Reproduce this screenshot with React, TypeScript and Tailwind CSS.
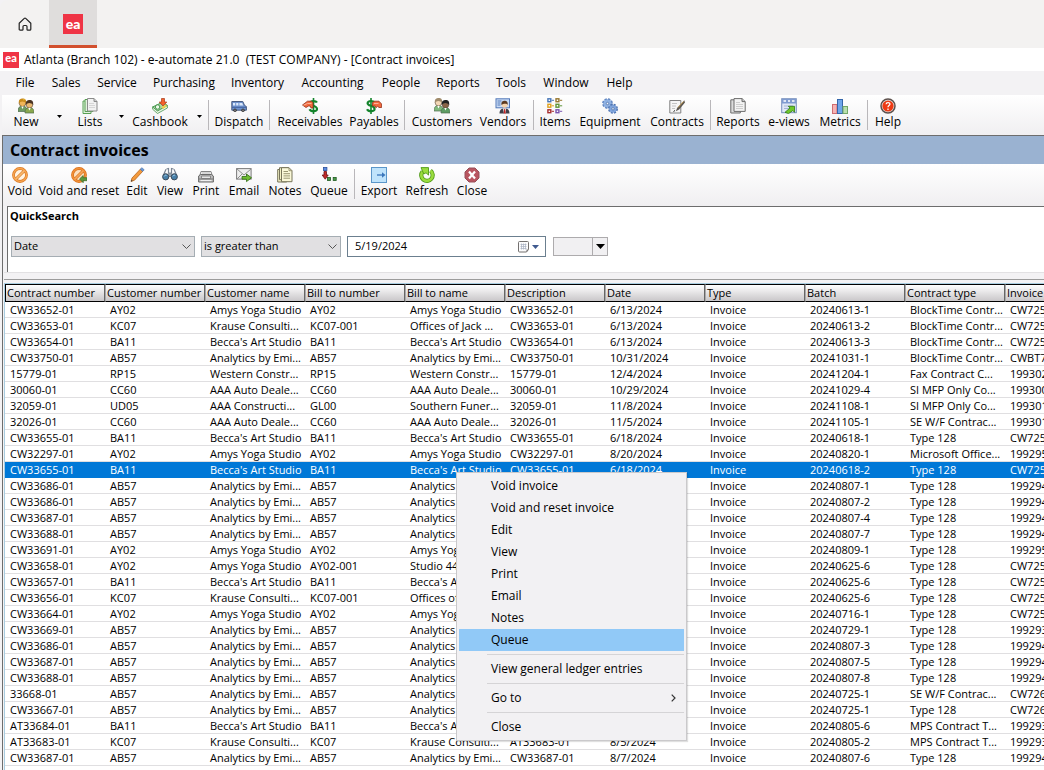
import { useState } from 'react';
import type { ReactNode } from 'react';
import clsx from 'clsx';

type Tool = {
  label: string;
  icon: ReactNode;
  width: string;
  // width of the drop-down arrow next to the button
  drop?: string;
  // draw a separator before the button
  sep?: boolean;
};

function Icon({ children }: { children: ReactNode }) {
  return (
    <svg viewBox="0 0 16 16" className="w-4 h-4" fill="none" aria-hidden="true">
      {children}
    </svg>
  );
}

const Dollar = ({ x }: { x: number }) => (
  <g transform={`translate(${x} 0)`} stroke="#14842c" strokeWidth="2.200">
    <path d="M8.500 4.600C7.600 2.900 1.600 2.300 1.600 5.200S8.600 7.600 8.600 10.900 2.200 13.600 1 11.200" />
    <path d="M5 0v16" strokeWidth="1.600" />
  </g>
);

const Person = ({ x, y, hair, skin, body }: { x: number; y: number; hair: string; skin: string; body: string }) => (
  <g transform={`translate(${x} ${y})`}>
    <path d="M-.5 13c0-4 1.600-5.400 4.500-5.400S8.500 9 8.500 13z" fill={body} stroke="#4d6b4d" strokeWidth=".7" />
    <circle cx="4" cy="4.700" r="3.300" fill={skin} stroke="#5a4a3a" strokeWidth=".6" />
    <path d="M.4 5.200C-.2.800 2 0 4.200 0S8.200 1 7.600 5.200C6.800 3.200 5 3.600 3.800 3 2.600 3.100 1.200 3.400.4 5.200z" fill={hair} />
    <path d="M2.800 8l1.200 2.500L5.200 8z" fill="#fff" />
  </g>
);

const icons = {
  new: (
    <Icon>
      <Person x={0.5} y={0.5} hair="#c98a1c" skin="#f1b65a" body="#6f9a62" />
      <Person x={7.5} y={2} hair="#4b3423" skin="#e9b873" body="#8aa84e" />
      <path d="M4 0l1 1.500L7 1 5.800 2.500z" fill="#f5d13a" />
    </Icon>
  ),
  lists: (
    <Icon>
      <path d="M1 3h8v12.500H1z" fill="#e3f2df" stroke="#57a052" />
      <path d="M3 1.500h8v12H3z" fill="#e3f2df" stroke="#57a052" />
      <path d="M5.500.5h6.500l3 3V13H5.500z" fill="#f2f2f2" stroke="#8b8b8b" />
      <path d="M12 .5v3h3" fill="#ccc" stroke="#8b8b8b" />
      <path d="M7 5.500h5M7 7.500h6M7 9.500h6" stroke="#d6d6d6" />
    </Icon>
  ),
  cashbook: (
    <Icon>
      <path d="M.6 9L11 4l4.400 3.500L5.500 13z" fill="#a9dba3" stroke="#4a9650" />
      <path d="M.6 9v2.200L5.500 15.500l9.900-5.500V7.500L5.500 13z" fill="#e6f6e2" stroke="#4a9650" strokeWidth=".8" />
      <circle cx="5.600" cy="9" r="2.200" fill="#eefaeb" stroke="#4a9650" />
      <path d="M9.500.5h3v3.500h2.300L11 8 7.200 4h2.300z" fill="#f4622c" stroke="#a83a18" strokeWidth=".7" />
      <path d="M9.500 9l5-2.500v2L11 11z" fill="#f1cf4a" />
    </Icon>
  ),
  dispatch: (
    <Icon>
      <path d="M.8 3.500h11l1.800 4 1.800 1v3.700H.8z" fill="#6f93cf" stroke="#4a5d82" />
      <path d="M2 5h2.200v2.500H2zM5.200 5h2.200v2.500H5.200zM8.400 5h2.800l1 2.500H8.400z" fill="#dce9fb" />
      <path d="M1 9.300h14" stroke="#3f5f9e" />
      <circle cx="4" cy="12.200" r="1.700" fill="#333" />
      <circle cx="12" cy="12.200" r="1.700" fill="#333" />
      <circle cx="4" cy="12.200" r=".6" fill="#ccc" />
      <circle cx="12" cy="12.200" r=".6" fill="#ccc" />
    </Icon>
  ),
  receivables: (
    <Icon>
      <Dollar x={6.5} />
      <path d="M.5 7L5.500 3.200H9.500L11 4.500V10H9L8.200 8H6.500L4 9.500z" fill="#f36a3e" stroke="#8f2f16" strokeWidth=".8" />
      <path d="M1.500 7.200L5.500 5.500h4" stroke="#f9b299" />
    </Icon>
  ),
  payables: (
    <Icon>
      <Dollar x={0} />
      <path d="M6.500 4.500L8.500 3.200H13L15.600 6V9.500H13L11.500 8.200 10 9.800 9.200 8H6.500z" fill="#f36a3e" stroke="#8f2f16" strokeWidth=".8" />
      <path d="M8 5.500h4.500" stroke="#f9b299" />
    </Icon>
  ),
  customers: (
    <Icon>
      <Person x={0.5} y={0} hair="#a08b6c" skin="#f3d7b6" body="#7fb87b" />
      <Person x={7.5} y={2} hair="#222" skin="#8a6548" body="#5d9c63" />
    </Icon>
  ),
  vendors: (
    <Icon>
      <rect x="1" y=".8" width="13.500" height="9" fill="#c9dbf5" stroke="#5378b8" />
      <path d="M2.500 3h4M2.500 5h3M2.500 7h3" stroke="#5378b8" />
      <path d="M4.500 15.500c0-4 2-5 5-5s5 1 5 5z" fill="#3f3f48" />
      <path d="M8 10.500h3.200l-.8 5H9z" fill="#fff" />
      <path d="M9.200 11h1l.5 4.500h-2z" fill="#c62222" />
      <circle cx="9.600" cy="6.800" r="2.900" fill="#f5d3ad" />
      <path d="M6.500 7C6 3.500 8 2.800 9.700 2.800S13 3.600 12.700 7C12 5 8 5.500 6.500 7z" fill="#5c3a20" />
    </Icon>
  ),
  items: (
    <Icon>
      {[
        ['#4877b8', '#97772f', 0.8],
        ['#e0a21f', '#5f9438', 6.3],
        ['#a62e2e', '#7955b0', 11.8],
      ].map(([a, b, y]) => (
        <g key={y} strokeWidth="1.400">
          <rect x=".9" y={y} width="2.900" height="2.900" stroke={a as string} />
          <path d={`M4.600 ${Number(y) + 1.5}h2.400`} stroke={a as string} strokeWidth="1" />
          <rect x="9" y={y} width="2.900" height="2.900" stroke={b as string} />
          <path d={`M12.800 ${Number(y) + 1.5}h2.400`} stroke={b as string} strokeWidth="1" />
        </g>
      ))}
    </Icon>
  ),
  equipment: (
    <Icon>
      <circle cx="5.500" cy="5.500" r="4.200" fill="#84a9dd" stroke="#5e83bf" strokeWidth="2.400" strokeDasharray="2.100 1.200" />
      <circle cx="5.500" cy="5.500" r="4" fill="#8fb1e2" />
      <circle cx="5.500" cy="5.500" r="1.200" fill="#f5f8fd" stroke="#4a6ea8" strokeWidth=".8" />
      <circle cx="11" cy="10.800" r="3.800" fill="#84a9dd" stroke="#4f74b2" strokeWidth="2.400" strokeDasharray="1.900 1.100" />
      <circle cx="11" cy="10.800" r="3.600" fill="#7fa4dc" />
      <circle cx="11" cy="10.800" r="1.200" fill="#f5f8fd" stroke="#4a6ea8" strokeWidth=".8" />
    </Icon>
  ),
  contracts: (
    <Icon>
      <path d="M.8 2.500h11V15H.8z" fill="#f5f5f5" stroke="#808080" />
      <path d="M3 5.500h5M3 8h4M3 10.500h3" stroke="#c4c4c4" />
      <path d="M15.300 2.200L8.300 9.800l-1.500 3.400 3.300-1.600L16 4.500z" fill="#5a5550" />
      <path d="M14.500 3.500L9 9.500" stroke="#c8a25a" />
      <path d="M6 12.500l-1.500 1" stroke="#222" />
    </Icon>
  ),
  reports: (
    <Icon>
      <path d="M.8 1.800h9.500V15H.8z" fill="#dcdcdc" stroke="#6c6c6c" />
      <path d="M4 .6h8l3.200 3v9.800H4z" fill="#f3f3f3" stroke="#6c6c6c" />
      <path d="M12 .6v3h3.200" fill="#c8c8c8" stroke="#6c6c6c" />
      <path d="M6 4.500h4M6 6.500h7M6 8.500h7M6 10.500h7" stroke="#cdcdcd" />
    </Icon>
  ),
  eviews: (
    <Icon>
      <rect x=".7" y=".7" width="14.600" height="14" fill="#dfe7f6" stroke="#7890bd" />
      <path d="M1 1h14v4.500H1z" fill="#7f9bd0" />
      <path d="M2.500 3h2.500M7 3h2M11 3h2.500" stroke="#fff" strokeWidth="1.500" />
      <path d="M3 8h9M3 10.500h5" stroke="#a5b4d4" />
      <path d="M4 14.300l5-4.300-1.700-1.700h6.200v6L11.800 12.600l-4.300 3z" fill="#6fc82c" stroke="#2f7a12" strokeWidth=".8" />
    </Icon>
  ),
  metrics: (
    <Icon>
      <rect x=".5" y="6.500" width="4.500" height="9" fill="#f6b3b4" stroke="#cf6d70" />
      <rect x="5.500" y="1.500" width="5" height="14" fill="#6ea6ea" stroke="#3466ab" />
      <rect x="11" y="8.500" width="4.500" height="7" fill="#b9dfae" stroke="#74a868" />
    </Icon>
  ),
  help: (
    <Icon>
      <circle cx="8" cy="8" r="7" fill="#e9e4e2" stroke="#5d504c" strokeWidth="1.500" />
      <circle cx="8" cy="8" r="5.600" fill="#ee3a14" />
      <path d="M6.100 6.300c.1-2.300 3.900-2.200 3.800 0C9.800 7.600 8 7.600 8 9.300M8 10.500v1.400" stroke="#fff" strokeWidth="1.300" />
    </Icon>
  ),
  void: (
    <Icon>
      <circle cx="8" cy="8" r="6.500" fill="#fff3e2" stroke="#d97a25" strokeWidth="2.800" />
      <circle cx="8" cy="8" r="6.500" stroke="#f8a550" strokeWidth="1.400" />
      <path d="M4 12l8-8" stroke="#d97a25" strokeWidth="3" />
      <path d="M3.600 12.400l8.800-8.800" stroke="#fab96f" strokeWidth="1.600" />
    </Icon>
  ),
  voidReset: (
    <Icon>
      <circle cx="8" cy="8" r="6.500" fill="#fbe0c0" stroke="#d9701c" strokeWidth="2.800" />
      <circle cx="8" cy="8" r="6.500" stroke="#f39239" strokeWidth="1.400" />
      <path d="M4 12l8-8" stroke="#d9701c" strokeWidth="3" />
      <path d="M3.600 12.400l8.800-8.800" stroke="#f6a659" strokeWidth="1.600" />
      <path d="M8.500 12L12.200 8.500v2.200H16v3h-3.800v2z" fill="#5b9a3f" stroke="#3b6b28" strokeWidth=".7" />
    </Icon>
  ),
  edit: (
    <Icon>
      <path d="M2 14.500l1-3.500L11.500 2l2.300 2.200L5.500 13.200z" fill="#f39a3c" stroke="#b8651c" strokeWidth=".8" />
      <path d="M11.300 2.200l1.600-1.500 2.300 2.100-1.500 1.600z" fill="#6d9bd8" stroke="#3f69a5" strokeWidth=".6" />
      <path d="M2 14.500l.5-1.700 1.200 1.100z" fill="#333" />
    </Icon>
  ),
  view: (
    <Icon>
      <path d="M4.500 2L6.500 1.500v5M11.500 2L9.500 1.500v5M4 2.200L1.500 8M12 2.200L14.500 8" stroke="#7a8593" strokeWidth="1.200" />
      <path d="M6.800 6h2.400v3.500H6.800z" fill="#a7b2bf" stroke="#68727f" strokeWidth=".7" />
      <circle cx="3.700" cy="9.800" r="3.100" fill="#477fa8" stroke="#3d4b59" />
      <circle cx="12.300" cy="9.800" r="3.100" fill="#477fa8" stroke="#3d4b59" />
      <path d="M2.200 9.400c.5-1.200 1.500-1.400 2.300-1M10.800 9.400c.5-1.200 1.500-1.400 2.300-1" stroke="#a7d3ef" />
    </Icon>
  ),
  print: (
    <Icon>
      <path d="M3 4.500h10l1.500 5H1.500z" fill="#f2f2f2" stroke="#868686" />
      <path d="M4 6h8M3.800 7.500h8.400" stroke="#bdbdbd" />
      <path d="M.6 9l2-1.500h10.800l2 1.500v6H.6z" fill="#bcbcbc" stroke="#6a6a6a" />
      <path d="M3.500 9h9v2.500h-9z" fill="#e6e6e6" stroke="#777" strokeWidth=".8" />
      <path d="M1 12h14.500" stroke="#777" />
      <path d="M2.500 13.600h11" stroke="#f5f5f5" />
    </Icon>
  ),
  email: (
    <Icon>
      <rect x=".6" y="1.600" width="14.500" height="10.500" fill="#eee" stroke="#7a7a7a" />
      <path d="M1 2l7 6 7-6M1 12l5-5M15 12l-5-5" stroke="#8f8f8f" />
      <path d="M6 9.500h4.500V7l5 3.800-5 3.800v-2.400H6z" fill="#6fbd32" stroke="#2f6a12" strokeWidth=".8" />
    </Icon>
  ),
  notes: (
    <Icon>
      <path d="M.7 2.500h9v12.500h-9z" fill="#f3f0c4" stroke="#77745a" />
      <path d="M2.500 .7h8.500v12H2.500z" fill="#f3f0c4" stroke="#77745a" />
      <path d="M4.500 .7h7.500l3 3v11H4.500z" fill="#faf8d8" stroke="#77745a" />
      <path d="M12 .7v3h3M6.500 4.500h4.500M6.500 6.700h6.500M6.500 8.900h6.500M6.500 11.200h6.500" stroke="#8e8b68" strokeWidth=".9" />
    </Icon>
  ),
  queue: (
    <Icon>
      <rect x="2.500" y=".5" width="3.400" height="3" fill="#5a8ae0" stroke="#2b4f9a" strokeWidth=".8" />
      <path d="M3 4.500h2.500v3.500h1.700L4.200 12.200 1.200 8H3z" fill="#c02a2a" stroke="#6f1111" strokeWidth=".8" />
      <rect x="6.500" y="10.500" width="3" height="3" fill="#4b9a4b" stroke="#1f5a1f" strokeWidth=".8" />
      <rect x="12.200" y="10.500" width="3" height="3" fill="#4b9a4b" stroke="#1f5a1f" strokeWidth=".8" />
    </Icon>
  ),
  export: (
    <Icon>
      <rect x=".5" y=".5" width="15" height="15" fill="#bfe3fb" stroke="#5b96c9" />
      <path d="M6 8h7" stroke="#3a76bb" strokeWidth="1.300" />
      <path d="M11 5.200L14.500 8 11 10.800z" fill="#3a76bb" />
    </Icon>
  ),
  refresh: (
    <Icon>
      <path d="M3.600 4.500A5.700 5.700 0 1 0 11.500 3.700" stroke="#4f9a16" strokeWidth="4.200" />
      <path d="M3.600 4.500A5.700 5.700 0 1 0 11.500 3.700" stroke="#9bdc3f" strokeWidth="2.600" />
      <path d="M2 .6h7.500v7.500L7 5.800 4.800 7z" fill="#9bdc3f" stroke="#4f9a16" strokeWidth=".9" />
    </Icon>
  ),
  close: (
    <Icon>
      <path d="M5 1h6l4 4v6l-4 4H5l-4-4V5z" fill="#b95560" stroke="#96505a" />
      <path d="M5 4.500l6 7M11 4.500l-6 7" stroke="#fff" strokeWidth="2.200" />
    </Icon>
  ),
};

const menus = [
  { label: 'File', width: 'w-[36px]' },
  { label: 'Sales', width: 'w-[46px]' },
  { label: 'Service', width: 'w-[56px]' },
  { label: 'Purchasing', width: 'w-[78px]' },
  { label: 'Inventory', width: 'w-[69px]' },
  { label: 'Accounting', width: 'w-[81px]' },
  { label: 'People', width: 'w-[56px]' },
  { label: 'Reports', width: 'w-[58px]' },
  { label: 'Tools', width: 'w-[48px]' },
  { label: 'Window', width: 'w-[62px]' },
  { label: 'Help', width: 'w-[45px]' },
];

const mainTools: Tool[] = [
  { label: 'New', icon: icons.new, width: 'w-[34px]', drop: 'w-[22px]' },
  { label: 'Lists', icon: icons.lists, width: 'w-[50px]', drop: 'w-[12px]' },
  { label: 'Cashbook', icon: icons.cashbook, width: 'w-[66px]', drop: 'w-[12px]' },
  { label: 'Dispatch', icon: icons.dispatch, width: 'w-[54px]', sep: true },
  { label: 'Receivables', icon: icons.receivables, width: 'w-[74px]', sep: true },
  { label: 'Payables', icon: icons.payables, width: 'w-[54px]' },
  { label: 'Customers', icon: icons.customers, width: 'w-[68px]', sep: true },
  { label: 'Vendors', icon: icons.vendors, width: 'w-[54px]' },
  { label: 'Items', icon: icons.items, width: 'w-[36px]', sep: true },
  { label: 'Equipment', icon: icons.equipment, width: 'w-[74px]' },
  { label: 'Contracts', icon: icons.contracts, width: 'w-[60px]' },
  { label: 'Reports', icon: icons.reports, width: 'w-[48px]', sep: true },
  { label: 'e-views', icon: icons.eviews, width: 'w-[54px]' },
  { label: 'Metrics', icon: icons.metrics, width: 'w-[48px]' },
  { label: 'Help', icon: icons.help, width: 'w-[34px]', sep: true },
];

const pageTools: Tool[] = [
  { label: 'Void', icon: icons.void, width: 'w-[34px]' },
  { label: 'Void and reset', icon: icons.voidReset, width: 'w-[84px]' },
  { label: 'Edit', icon: icons.edit, width: 'w-[32px]' },
  { label: 'View', icon: icons.view, width: 'w-[34px]' },
  { label: 'Print', icon: icons.print, width: 'w-[38px]' },
  { label: 'Email', icon: icons.email, width: 'w-[38px]' },
  { label: 'Notes', icon: icons.notes, width: 'w-[44px]' },
  { label: 'Queue', icon: icons.queue, width: 'w-[44px]' },
  { label: 'Export', icon: icons.export, width: 'w-[42px]', sep: true },
  { label: 'Refresh', icon: icons.refresh, width: 'w-[54px]' },
  { label: 'Close', icon: icons.close, width: 'w-[36px]' },
];

const columns = [
  'Contract number', 'Customer number', 'Customer name', 'Bill to number', 'Bill to name',
  'Description', 'Date', 'Type', 'Batch', 'Contract type', 'Invoice',
];

const AMYS = 'Amys Yoga Studio';
const KRAUSE = 'Krause Consulti...';
const BECCA = "Becca's Art Studio";
const ANALYTICS = 'Analytics by Emi...';
const AAA = 'AAA Auto Deale...';
const WESTERN = 'Western Constr...';
const JACK = 'Offices of Jack ...';
const BLOCK = 'BlockTime Contr...';
const MFP = 'SI MFP Only Co...';
const WF = 'SE W/F Contrac...';
const MPS = 'MPS Contract T...';
const T128 = 'Type 128';

// contract, customer, name, bill to, bill to name, date, batch, contract type, invoice
const invoices = [
  ['CW33652-01', 'AY02', AMYS, 'AY02', AMYS, '6/13/2024', '20240613-1', BLOCK, 'CW725'],
  ['CW33653-01', 'KC07', KRAUSE, 'KC07-001', JACK, '6/13/2024', '20240613-2', BLOCK, 'CW725'],
  ['CW33654-01', 'BA11', BECCA, 'BA11', BECCA, '6/13/2024', '20240613-3', BLOCK, 'CW725'],
  ['CW33750-01', 'AB57', ANALYTICS, 'AB57', ANALYTICS, '10/31/2024', '20241031-1', BLOCK, 'CWBT7'],
  ['15779-01', 'RP15', WESTERN, 'RP15', WESTERN, '12/4/2024', '20241204-1', 'Fax Contract C...', '199302'],
  ['30060-01', 'CC60', AAA, 'CC60', AAA, '10/29/2024', '20241029-4', MFP, '199300'],
  ['32059-01', 'UD05', 'AAA Constructi...', 'GL00', 'Southern Funer...', '11/8/2024', '20241108-1', MFP, '199301'],
  ['32026-01', 'CC60', AAA, 'CC60', AAA, '11/5/2024', '20241105-1', WF, '199301'],
  ['CW33655-01', 'BA11', BECCA, 'BA11', BECCA, '6/18/2024', '20240618-1', T128, 'CW725'],
  ['CW32297-01', 'AY02', AMYS, 'AY02', AMYS, '8/20/2024', '20240820-1', 'Microsoft Office...', '199295'],
  ['CW33655-01', 'BA11', BECCA, 'BA11', BECCA, '6/18/2024', '20240618-2', T128, 'CW725'],
  ['CW33686-01', 'AB57', ANALYTICS, 'AB57', ANALYTICS, '8/7/2024', '20240807-1', T128, '199294'],
  ['CW33686-01', 'AB57', ANALYTICS, 'AB57', ANALYTICS, '8/7/2024', '20240807-2', T128, '199294'],
  ['CW33687-01', 'AB57', ANALYTICS, 'AB57', ANALYTICS, '8/7/2024', '20240807-4', T128, '199294'],
  ['CW33688-01', 'AB57', ANALYTICS, 'AB57', ANALYTICS, '8/7/2024', '20240807-7', T128, '199294'],
  ['CW33691-01', 'AY02', AMYS, 'AY02', AMYS, '8/9/2024', '20240809-1', T128, '199295'],
  ['CW33658-01', 'AY02', AMYS, 'AY02-001', 'Studio 44', '6/25/2024', '20240625-6', T128, 'CW725'],
  ['CW33657-01', 'BA11', BECCA, 'BA11', BECCA, '6/25/2024', '20240625-6', T128, 'CW725'],
  ['CW33656-01', 'KC07', KRAUSE, 'KC07-001', JACK, '6/25/2024', '20240625-6', T128, 'CW725'],
  ['CW33664-01', 'AY02', AMYS, 'AY02', AMYS, '7/16/2024', '20240716-1', T128, 'CW725'],
  ['CW33669-01', 'AB57', ANALYTICS, 'AB57', ANALYTICS, '7/29/2024', '20240729-1', T128, '199293'],
  ['CW33686-01', 'AB57', ANALYTICS, 'AB57', ANALYTICS, '8/7/2024', '20240807-3', T128, '199294'],
  ['CW33687-01', 'AB57', ANALYTICS, 'AB57', ANALYTICS, '8/7/2024', '20240807-5', T128, '199294'],
  ['CW33688-01', 'AB57', ANALYTICS, 'AB57', ANALYTICS, '8/7/2024', '20240807-8', T128, '199294'],
  ['33668-01', 'AB57', ANALYTICS, 'AB57', ANALYTICS, '7/25/2024', '20240725-1', WF, 'CW726'],
  ['CW33667-01', 'AB57', ANALYTICS, 'AB57', ANALYTICS, '7/25/2024', '20240725-1', T128, 'CW726'],
  ['AT33684-01', 'BA11', BECCA, 'BA11', BECCA, '8/5/2024', '20240805-6', MPS, '199293'],
  ['AT33683-01', 'KC07', KRAUSE, 'KC07', KRAUSE, '8/5/2024', '20240805-2', MPS, '199293'],
  ['CW33687-01', 'AB57', ANALYTICS, 'AB57', ANALYTICS, '8/7/2024', '20240807-6', T128, '199294'],
  ['CW33688-01', 'AB57', ANALYTICS, 'AB57', ANALYTICS, '8/7/2024', '20240807-9', T128, '199294'],
];

const contextItems = [
  ['Void invoice', 'Void and reset invoice', 'Edit', 'View', 'Print', 'Email', 'Notes', 'Queue'],
  ['View general ledger entries'],
  ['Go to'],
  ['Close'],
];

function Toolbar({ tools }: { tools: Tool[] }) {
  return (
    <>
      {tools.map(tool => (
        <div key={tool.label} className="flex shrink-0">
          {tool.sep && <div className="w-px h-[30px] mx-[3px] mt-0.5 bg-[#b9b7ba]" />}
          <button type="button" className={clsx('flex flex-col items-center text-xs leading-4 whitespace-nowrap', tool.width)}>
            {tool.icon}
            <span>{tool.label}</span>
          </button>
          {tool.drop && (
            <button type="button" aria-label={`${tool.label} options`} className={clsx('flex justify-end items-center pr-[3px]', tool.drop)}>
              <svg viewBox="0 0 5 3" className="w-[5px] h-[3px]"><path d="M0 0h5L2.500 3z" fill="#000" /></svg>
            </button>
          )}
        </div>
      ))}
    </>
  );
}

function Combo({ label, value, width }: { label: string; value: string; width: string }) {
  return (
    <div className={clsx('relative', width)}>
      <select aria-label={label} className="block appearance-none w-full h-[21px] pl-[2px] pr-5 text-[11px] bg-[#e1e0e2] border border-[#a5adb3] outline-none">
        <option>{value}</option>
      </select>
      <svg viewBox="0 0 9 5" className="absolute right-1 top-2 w-[9px] h-[5px] pointer-events-none" fill="none">
        <path d="M.5.500l4 4 4-4" stroke="#555" />
      </svg>
    </div>
  );
}

function Logo({ className }: { className: string }) {
  return (
    <span className={clsx('flex items-center justify-center bg-[#ef3445] text-white font-[Lato] font-black', className)}>ea</span>
  );
}

export default function App() {
  const [selected, setSelected] = useState(10);
  const [active, setActive] = useState('Queue');
  const [date, setDate] = useState('5/19/2024');

  return (
    <div className="relative flex flex-col h-screen overflow-hidden bg-[#f3f2f4] text-black font-['Open_Sans',sans-serif]">
      {/* App tabs */}
      <nav className="flex shrink-0 h-12 pl-px bg-[#f3f2f1] rounded-tl-lg">
        <button type="button" aria-label="Home" className="w-12 flex items-center justify-center">
          <svg viewBox="0 0 14 14" className="w-3.5 h-3.5" fill="none" stroke="#222" strokeWidth="1.200" strokeLinejoin="round">
            <path d="M1.200 6.200L6.300 1.400Q7 .8 7.700 1.400L12.800 6.200V12.200Q12.800 13.200 11.800 13.200H9.800Q9 13.200 9 12.400V9.500Q9 8.500 8 8.500H6Q5 8.500 5 9.500V12.400Q5 13.200 4.200 13.200H2.200Q1.200 13.200 1.200 12.200Z" />
          </svg>
        </button>
        <button type="button" className="w-12 flex items-center justify-center bg-[#dfdddc] border-b-3 border-[#d2502e] pt-[3px]">
          <Logo className="w-5 h-5 pb-0.5 text-[14px]" />
        </button>
      </nav>

      {/* Window title */}
      <header className="flex items-center shrink-0 h-[23px] pl-[3px] bg-white text-xs">
        <Logo className="w-4 h-4 pb-0.5 text-[11px]" />
        <span className="pl-[5px] whitespace-pre">Atlanta (Branch 102) - e-automate 21.0  (TEST COMPANY) - [Contract invoices]</span>
      </header>

      <nav className="flex shrink-0 h-6 pl-[7px] text-xs">
        {menus.map(menu => (
          <button type="button" key={menu.label} className={clsx('text-center whitespace-nowrap', menu.width)}>{menu.label}</button>
        ))}
      </nav>

      <div className="flex shrink-0 h-10 pl-[7px] pt-[3px] ml-0.5 bg-linear-to-b from-white to-[#f0eff1]">
        <Toolbar tools={mainTools} />
      </div>

      <main className="flex flex-col flex-1 min-h-0 ml-0.5 border-t border-l border-[#6d6d6d]">
        <h1 className="shrink-0 h-7 pl-[7px] leading-7 text-base font-bold bg-[#9ab2d1]">Contract invoices</h1>

        <div className="flex shrink-0 h-[42px] pt-[3px] bg-linear-to-b from-white to-[#f0eff1]">
          <Toolbar tools={pageTools} />
        </div>

        {/* Quick search */}
        <section className="shrink-0 h-[66px] ml-1 pl-0.5 bg-white border-t border-l border-[#6d6d6d]">
          <h2 className="text-[11px] leading-[18px] font-bold">QuickSearch</h2>
          <form className="flex items-start pt-[11px] pl-px" onSubmit={e => e.preventDefault()}>
            <Combo label="Field" value="Date" width="w-[184px]" />
            <div className="w-1.5" />
            <Combo label="Condition" value="is greater than" width="w-[140px]" />
            <div className="w-1.5" />
            <div className="flex items-center w-[199px] h-[21px] bg-white border border-[#6b7f8f]">
              <input
                aria-label="Date value"
                className="flex-1 min-w-0 pl-[7px] text-[11px] outline-none"
                value={date}
                onChange={e => setDate(e.target.value)}
              />
              <button type="button" aria-label="Open calendar" className="flex items-center gap-0.5 pr-1.5">
                <svg viewBox="0 0 12 12" className="w-3 h-3" fill="none">
                  <path d="M.5 1.500q0-1 1-1h8q1 0 1 1v7l-2 2.500h-7q-1 0-1-1z" fill="#fbfbfc" stroke="#73706f" />
                  <path d="M2.500 3.500h6M2.500 5.500h6M2.500 7.500h6M3.500 2.500v6M5.500 2.500v6M7.500 2.500v6" stroke="#a7b0c2" strokeWidth=".7" />
                  <path d="M8.500 11V8.500h2z" fill="#73706f" />
                </svg>
                <svg viewBox="0 0 7 4" className="w-[7px] h-1"><path d="M0 0h7L3.500 4z" fill="#3f5a8f" /></svg>
              </button>
            </div>
            <div className="w-[7px]" />
            <div className="flex h-[19px] mt-px border border-[#adabad] bg-[#f1f0f2]">
              <input aria-label="Extra value" className="w-[38px]" />
              <button type="button" aria-label="Extra options" className="w-[15px] flex items-center justify-center border-l border-[#adabad]">
                <svg viewBox="0 0 9 5" className="w-[9px] h-[5px]"><path d="M0 0h9L4.500 5z" fill="#000" /></svg>
              </button>
            </div>
          </form>
        </section>

        <div className="shrink-0 h-2 ml-px border-b border-[#9c9c9c] border-t border-t-[#e2e1e3]" />

        {/* Invoice grid */}
        <div className="flex-1 min-h-0 mt-[3px] ml-px overflow-hidden bg-white border-l border-t border-[#a9cde0]">
          <table className="table-fixed w-[1100px] border-separate border-spacing-0 text-[11px] whitespace-nowrap">
            <thead>
              <tr>
                {columns.map(col => (
                  <th key={col} className="h-[18px] p-0 pl-px align-top leading-[15px] text-left font-normal border border-y-black border-r-[#666] border-l-[#aaa] first:border-l-black bg-linear-to-b from-white to-[#c9c7c9]">
                    {col}
                  </th>
                ))}
              </tr>
            </thead>
            <tbody>
              {invoices.map(([contract, customer, name, billTo, billName, day, batch, type, invoice], i) => (
                <tr key={i} onClick={() => setSelected(i)} className={clsx(i === selected && 'bg-[#0078d7] text-white')}>
                  {[contract, customer, name, billTo, billName, contract, day, 'Invoice', batch, type, invoice].map((cell, j) => (
                    <td key={j} className={clsx('h-4 p-0 pl-[5px] leading-[15px] border-b', i === selected ? 'border-[#0078d7]' : 'border-[#e0dfe1]')}>
                      {cell}
                    </td>
                  ))}
                </tr>
              ))}
            </tbody>
          </table>
        </div>
      </main>

      {/* Context menu */}
      <div role="menu" className="absolute left-[456px] top-[472px] w-[231px] p-0.5 bg-[#f2f1f3] border border-[#cac9cb] shadow-[1px_1px_1px_rgba(0,0,0,0.12)] text-xs">
        {contextItems.map((group, g) => (
          <div key={g}>
            {g > 0 && <div className="h-px my-[3px] ml-7 bg-[#d5d4d6]" />}
            {group.map(item => (
              <button
                type="button"
                role="menuitem"
                key={item}
                onMouseEnter={() => setActive(item)}
                className={clsx('flex items-center justify-between w-full h-[22px] pl-8 pr-2', item === active && 'bg-[#91c9f7]')}
              >
                {item}
                {item === 'Go to' && (
                  <svg viewBox="0 0 5 8" className="w-[5px] h-2" fill="none"><path d="M.7.700L4 4 .7 7.300" stroke="#333" strokeWidth="1.200" /></svg>
                )}
              </button>
            ))}
          </div>
        ))}
      </div>
    </div>
  );
}
